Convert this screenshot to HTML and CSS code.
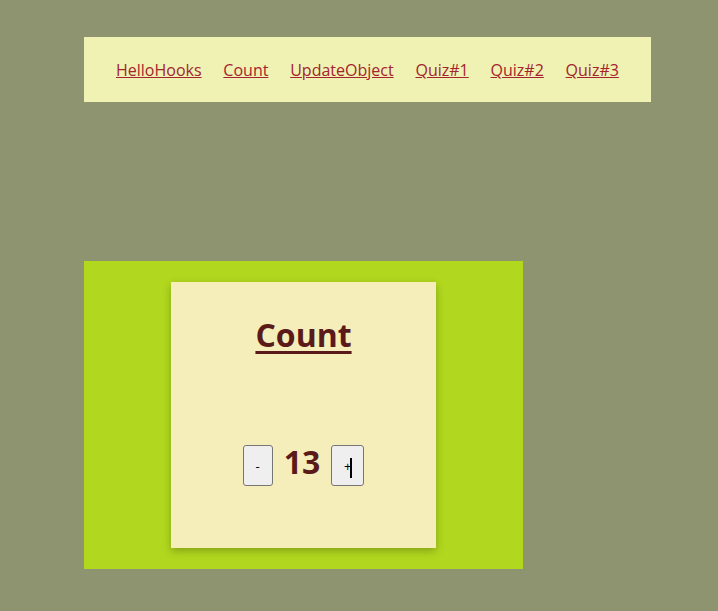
FILE: index.html
```html
<!DOCTYPE html>
<html>
<head>
<meta charset="utf-8">
<link rel="stylesheet" href="styles.css">
</head>
<body>
<div class="page">
  <nav class="nav">
    <a href="#">HelloHooks</a>
    <a href="#">Count</a>
    <a href="#">UpdateObject</a>
    <a href="#">Quiz#1</a>
    <a href="#">Quiz#2</a>
    <a href="#">Quiz#3</a>
  </nav>
  <section class="stage">
    <div class="card">
      <h1 class="title">Count</h1>
      <div class="counter">
        <button class="btn btn-minus">-</button>
        <span class="value">13</span>
        <button class="btn btn-plus">+<span class="caret"></span></button>
      </div>
    </div>
  </section>
</div>
</body>
</html>
```
FILE: styles.css
```css
html, body {
  margin: 0;
  padding: 0;
}
body {
  background: #8e9370;
  font-family: "Open Sans", "Noto Sans", sans-serif;
  width: 718px;
  height: 611px;
  overflow: hidden;
}
.page {
  padding: 37px 84px 0;
  display: flex;
  flex-direction: column;
  align-items: flex-start;
}
.nav {
  background: #eff2b2;
  height: 65px;
  padding: 0 32px;
  display: flex;
  align-items: center;
  gap: 21.8px;
}
.nav a {
  color: #a3242f;
  font-size: 16px;
  text-decoration: underline;
  margin-top: 1px;
}
.stage {
  margin-top: 159px;
  width: 439px;
  height: 308px;
  background: #b1d81e;
  display: flex;
  justify-content: center;
  align-items: flex-start;
  padding-top: 21px;
  box-sizing: border-box;
}
.card {
  width: 265px;
  height: 266px;
  background: #f5eebb;
  box-shadow: 0 3px 8px rgba(0, 0, 0, 0.25);
  display: flex;
  flex-direction: column;
  align-items: center;
}
.title {
  margin: 31px 0 0;
  font-size: 32px;
  line-height: 44px;
  font-weight: 700;
  color: #5a1a1a;
  text-decoration: underline;
  text-decoration-thickness: 3px;
  text-underline-offset: 4px;
}
.counter {
  margin-top: 88px;
  display: flex;
  align-items: center;
  gap: 11px;
}
.value {
  font-size: 32px;
  font-weight: 700;
  color: #5a1a1a;
  line-height: 41px;
  margin-top: -9px;
}
.btn {
  position: relative;
  height: 41px;
  padding: 0;
  background: #efefef;
  border: 1px solid #767676;
  border-radius: 3px;
  font-family: "Open Sans", sans-serif;
  font-size: 13px;
  color: #000;
}
.btn-minus {
  width: 30px;
}
.btn-plus {
  width: 33px;
}
.caret {
  position: absolute;
  left: 18px;
  top: 12px;
  width: 2px;
  height: 20px;
  background: #000;
}
```
